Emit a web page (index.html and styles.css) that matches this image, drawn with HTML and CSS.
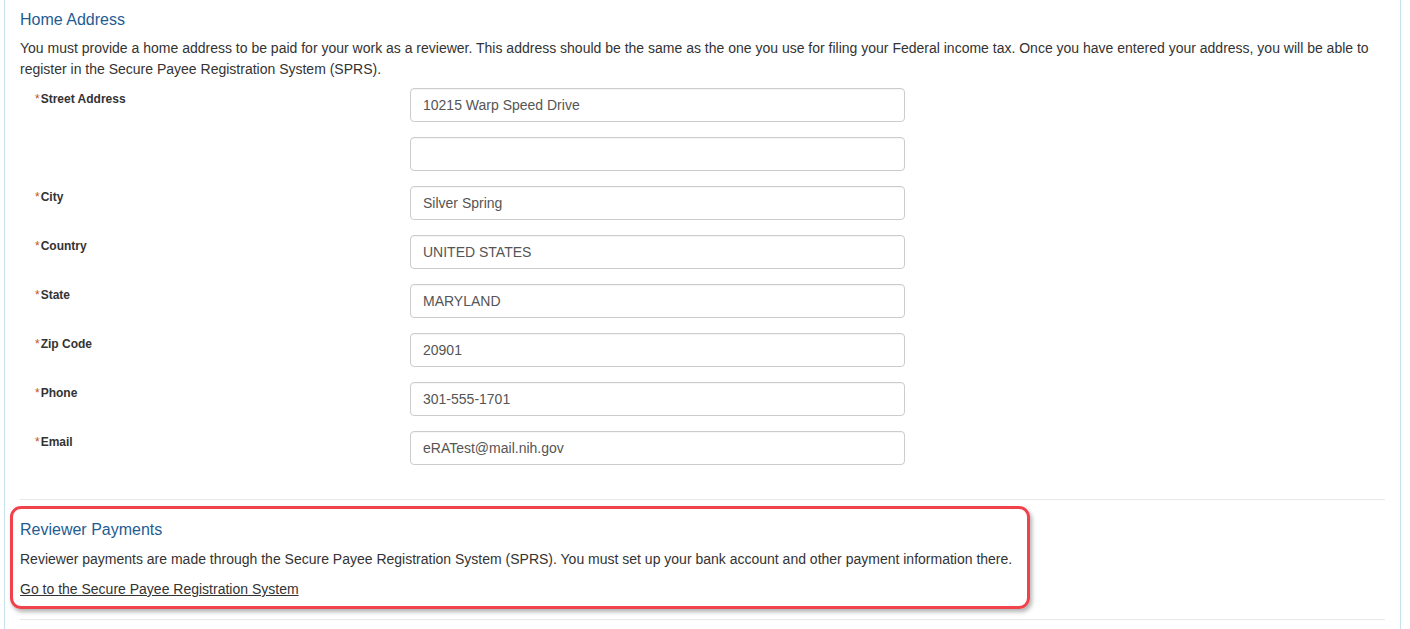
FILE: index.html
```html
<!DOCTYPE html>
<html lang="en">
<head>
<meta charset="utf-8">
<title>Home Address</title>
<link rel="stylesheet" href="styles.css">
</head>
<body>
<div class="panel">
  <section class="home">
    <h2 class="title">Home Address</h2>
    <p class="intro">You must provide a home address to be paid for your work as a reviewer. This address should be the same as the one you use for filing your Federal income tax. Once you have entered your address, you will be able to register in the Secure Payee Registration System (SPRS).</p>
    <div class="form">
      <label class="lbl"><span class="req">*</span>Street Address</label>
      <div class="inputs">
        <div class="field">10215 Warp Speed Drive</div>
        <div class="field"></div>
      </div>
      <label class="lbl"><span class="req">*</span>City</label>
      <div class="field">Silver Spring</div>
      <label class="lbl"><span class="req">*</span>Country</label>
      <div class="field">UNITED STATES</div>
      <label class="lbl"><span class="req">*</span>State</label>
      <div class="field">MARYLAND</div>
      <label class="lbl"><span class="req">*</span>Zip Code</label>
      <div class="field">20901</div>
      <label class="lbl"><span class="req">*</span>Phone</label>
      <div class="field">301-555-1701</div>
      <label class="lbl"><span class="req">*</span>Email</label>
      <div class="field">eRATest@mail.nih.gov</div>
    </div>
  </section>
  <hr class="divider">
  <section class="payments">
    <h2 class="title">Reviewer Payments</h2>
    <p class="pay-text">Reviewer payments are made through the Secure Payee Registration System (SPRS). You must set up your bank account and other payment information there.</p>
    <a class="pay-link" href="#">Go to the Secure Payee Registration System</a>
  </section>
  <hr class="divider bottom">
</div>
</body>
</html>
```
FILE: styles.css
```css
html, body {
  margin: 0;
  padding: 0;
  background: #ffffff;
}
body {
  font-family: "Liberation Sans", Arial, sans-serif;
  color: #333333;
  height: 629px;
  overflow: hidden;
}
.panel {
  margin-left: 4px;
  width: 1397px;
  box-sizing: border-box;
  border-left: 1px solid #c6e2ec;
  border-right: 1px solid #c6e2ec;
  padding: 10px 15px 20px 15px;
  min-height: 629px;
}
.title {
  margin: 0;
  font-size: 16px;
  line-height: 20px;
  font-weight: normal;
  color: #1f5c93;
}
.intro {
  margin: 8px 0 8px 0;
  font-size: 14px;
  line-height: 21px;
}
.form {
  display: grid;
  grid-template-columns: 390px 495px;
  row-gap: 15px;
}
.inputs {
  display: flex;
  flex-direction: column;
  gap: 15px;
}
.lbl {
  padding-left: 15px;
  padding-top: 4px;
  font-size: 12px;
  line-height: 15px;
  font-weight: bold;
  color: #333333;
}
.req {
  color: #c8511b;
  font-weight: normal;
  margin-right: 1px;
}
.field {
  height: 34px;
  box-sizing: border-box;
  border: 1px solid #cccccc;
  border-radius: 4px;
  padding: 0 12px;
  font-size: 14px;
  line-height: 32px;
  color: #555555;
  box-shadow: inset 0 1px 1px rgba(0,0,0,0.04);
}
.divider {
  border: 0;
  border-top: 1px solid #e8e8e8;
  margin: 34px 0 6px 0;
  height: 0;
}
.divider.bottom {
  margin: 10px 0 0 0;
}
.payments {
  margin-left: -10px;
  width: 1020px;
  box-sizing: border-box;
  border: 3px solid #f0424a;
  border-radius: 11px;
  padding: 11px 7px 6px 7px;
  box-shadow: 2px 3px 4px rgba(0,0,0,0.3);
}
.pay-text {
  margin: 9px 0 9px 0;
  font-size: 14px;
  line-height: 21px;
}
.pay-link {
  display: block;
  font-size: 14px;
  line-height: 21px;
  color: #333333;
  text-decoration: underline;
}
```
